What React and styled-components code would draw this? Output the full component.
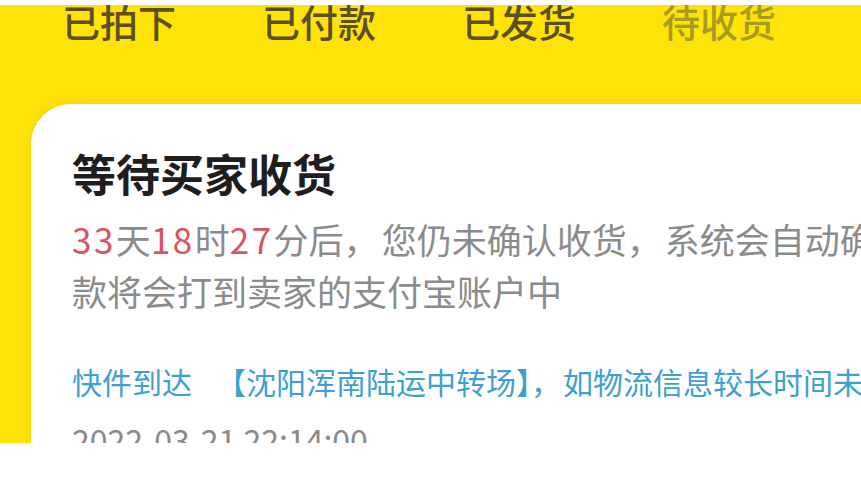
import React from 'react'
import styled, { createGlobalStyle } from 'styled-components'

const GlobalStyle = createGlobalStyle`
  html, body {
    margin: 0;
    padding: 0;
    background: #ffffff;
    overflow: hidden;
  }
  body {
    font-family: "Noto Sans CJK SC", "Noto Sans", sans-serif;
  }
`;

const Screen = styled.div`
  margin-top: 5px;
  width: 861px;
  height: 438px;
  background: #fee30b;
  overflow: hidden;
`;

const Tabs = styled.div`
  display: flex;
  gap: 86px;
  margin-top: -7px;
  padding-left: 62px;
  white-space: nowrap;
`;

const Tab = styled.div`
  font-size: 38px;
  line-height: 46px;
  font-weight: 500;
  color: ${p => (p.$muted ? '#a89b1d' : '#5d4f22')};
`;

const Card = styled.div`
  margin: 60px 0 0 31px;
  width: 900px;
  height: 400px;
  box-sizing: border-box;
  padding: 43px 0 0 41px;
  background: #ffffff;
  border-top-left-radius: 40px;
  box-shadow: 0 -3px 8px rgba(190, 160, 0, 0.18);
`;

const Title = styled.h1`
  margin: 0;
  font-size: 44px;
  line-height: 52px;
  font-weight: 700;
  color: #1e1e1e;
`;

const Desc = styled.div`
  margin-top: 14px;
  font-size: 35px;
  line-height: 52px;
  color: #8b8b8b;
  white-space: pre;
`;

const Num = styled.span`
  color: #d9545c;
  letter-spacing: 2.5px;
`;

const Gap = styled.span`
  display: inline-block;
  width: ${p => p.$w}px;
`;

const Track = styled.div`
  margin-top: 40px;
  font-size: 30px;
  line-height: 48px;
  color: #3ea0cf;
  white-space: pre;
`;

const Time = styled.div`
  margin-top: 10px;
  font-size: 32px;
  line-height: 48px;
  color: #8b8b8b;
  white-space: nowrap;
`;

const tabs = [
  { label: '已拍下' },
  { label: '已付款' },
  { label: '已发货' },
  { label: '待收货', muted: true },
  { label: '已完成', muted: true },
];

export default function App() {
  return (
    <>
      <GlobalStyle />
      <Screen>
        <Tabs>
          {tabs.map(t => (
            <Tab key={t.label} $muted={t.muted}>{t.label}</Tab>
          ))}
        </Tabs>
        <Card>
          <Title>等待买家收货</Title>
          <Desc>
            <div>
              <Num>33</Num>天<Num>18</Num>时<Num>27</Num>分后，<Gap $w={3} />您仍未确认收货，<Gap $w={3} />系统会自动确认收货，
            </div>
            <div>款将会打到卖家的支付宝账户中</div>
          </Desc>
          <Track>快件到达<Gap $w={24} />【沈阳浑南陆运中转场】，<Gap $w={2} />如物流信息较长时间未更新，请联系商家</Track>
          <Time>2022-03-21 22:14:00</Time>
        </Card>
      </Screen>
    </>
  )
}
